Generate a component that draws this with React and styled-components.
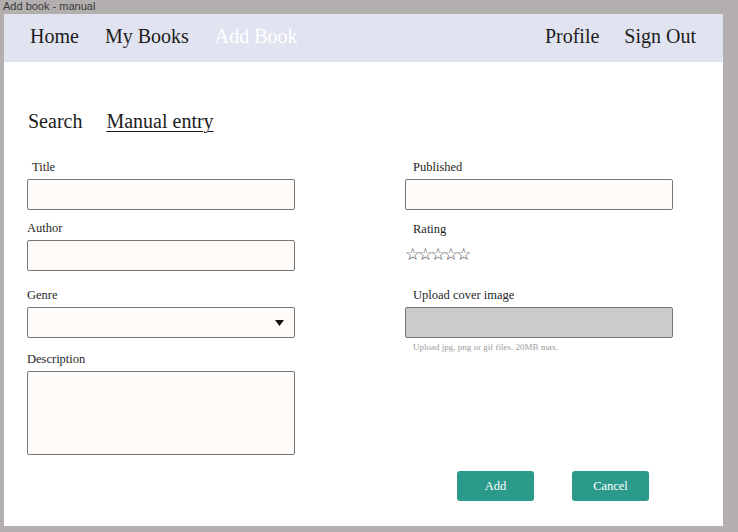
import styled, { createGlobalStyle } from 'styled-components'

const GlobalStyle = createGlobalStyle`
    html, body {
        margin: 0;
        padding: 0;
        background-color: #b3afaf;
    }
    * {
        box-sizing: border-box;
    }
`

const TitleBar = styled.div`
    height: 14px;
    padding-left: 3px;
    font-family: "Liberation Sans", Arial, sans-serif;
    font-size: 11px;
    line-height: 13px;
    color: #3a3a3a;
`

const Window = styled.div`
    margin-left: 4px;
    width: 719px;
    height: 512px;
    background-color: #ffffff;
    font-family: "Liberation Serif", "Times New Roman", serif;
    color: #1c1c1c;
`

const NavBar = styled.nav`
    height: 48px;
    display: flex;
    align-items: center;
    justify-content: space-between;
    padding: 0 27px 4px 26px;
    background-color: #e1e4f0;
`

const NavGroup = styled.div`
    display: flex;
    align-items: center;
    gap: ${p => p.$gap}px;
`

const NavLink = styled.a`
    font-size: 20px;
    line-height: 24px;
    color: ${p => (p.$active ? '#ffffff' : '#1c1c1c')};
    text-decoration: none;
    cursor: pointer;
`

const Content = styled.main`
    padding: 47px 0 0 23px;
`

const Tabs = styled.div`
    display: flex;
    gap: 24px;
    padding-left: 1px;
`

const Tab = styled.span`
    font-size: 20px;
    line-height: 24px;
    text-decoration: ${p => (p.$active ? 'underline' : 'none')};
    text-decoration-thickness: 1px;
    text-underline-offset: 3px;
    cursor: pointer;
`

const Columns = styled.div`
    display: flex;
    gap: 110px;
    margin-top: 27px;
`

const Column = styled.div`
    width: 268px;
    display: flex;
    flex-direction: column;
`

const Field = styled.div`
    display: flex;
    flex-direction: column;
    margin-top: ${p => p.$top || 0}px;
`

const Label = styled.label`
    font-size: 12.5px;
    line-height: 14px;
    color: #1f1f1f;
    padding-left: ${p => p.$indent || 0}px;
    margin-bottom: ${p => (p.$below === undefined ? 5 : p.$below)}px;
`

const Input = styled.input`
    height: 31px;
    width: 100%;
    border: 1px solid #767676;
    border-radius: 2px;
    background-color: ${p => (p.$grey ? '#cbcbcb' : '#fffbf8')};
    font-family: inherit;
    font-size: 13px;
    padding: 0 8px;
    outline: none;
`

const SelectWrap = styled.div`
    position: relative;
`

const Select = styled.select`
    height: 31px;
    width: 100%;
    border: 1px solid #767676;
    border-radius: 2px;
    background-color: #fffbf8;
    appearance: none;
    font-family: inherit;
    font-size: 13px;
    padding: 0 8px;
    outline: none;
`

const Caret = styled.svg`
    position: absolute;
    right: 11px;
    top: 13px;
    pointer-events: none;
`

const TextArea = styled.textarea`
    height: 84px;
    width: 100%;
    border: 1px solid #767676;
    border-radius: 2px;
    background-color: #fffbf8;
    resize: none;
    font-family: inherit;
    outline: none;
`

const Stars = styled.div`
    font-family: "DejaVu Sans", sans-serif;
    font-size: 17px;
    line-height: 13px;
    height: 13px;
    color: #4a4a4a;
    letter-spacing: -2.5px;
    margin-top: -1px;
`

const Help = styled.p`
    margin: 4px 0 0 8px;
    font-size: 9px;
    line-height: 10px;
    color: #9b9b9b;
`

const Actions = styled.div`
    display: flex;
    justify-content: flex-end;
    gap: 38px;
    margin-top: 16px;
    padding-right: 74px;
`

const Button = styled.button`
    width: 77px;
    height: 30px;
    border: none;
    border-radius: 3px;
    background-color: #2b9a8a;
    color: #ffffff;
    font-family: "Liberation Serif", "Times New Roman", serif;
    font-size: 12.5px;
    cursor: pointer;
`

function App() {
    return (
        <>
            <GlobalStyle />
            <TitleBar>Add book - manual</TitleBar>
            <Window>
                <NavBar>
                    <NavGroup $gap={26}>
                        <NavLink>Home</NavLink>
                        <NavLink>My Books</NavLink>
                        <NavLink $active>Add Book</NavLink>
                    </NavGroup>
                    <NavGroup $gap={25}>
                        <NavLink>Profile</NavLink>
                        <NavLink>Sign Out</NavLink>
                    </NavGroup>
                </NavBar>

                <Content>
                    <Tabs>
                        <Tab>Search</Tab>
                        <Tab $active>Manual entry</Tab>
                    </Tabs>

                    <Columns>
                        <Column>
                            <Field>
                                <Label $indent={5}>Title</Label>
                                <Input type="text" />
                            </Field>
                            <Field $top={11}>
                                <Label>Author</Label>
                                <Input type="text" />
                            </Field>
                            <Field $top={17}>
                                <Label>Genre</Label>
                                <SelectWrap>
                                    <Select defaultValue="">
                                        <option value=""></option>
                                    </Select>
                                    <Caret width="9" height="6" viewBox="0 0 9 6">
                                        <path d="M0 0 L9 0 L4.5 6 Z" fill="#111" />
                                    </Caret>
                                </SelectWrap>
                            </Field>
                            <Field $top={14}>
                                <Label>Description</Label>
                                <TextArea />
                            </Field>
                        </Column>

                        <Column>
                            <Field>
                                <Label $indent={8}>Published</Label>
                                <Input type="text" />
                            </Field>
                            <Field $top={12}>
                                <Label $indent={8} $below={13}>Rating</Label>
                                <Stars>☆☆☆☆☆</Stars>
                            </Field>
                            <Field $top={27}>
                                <Label $indent={8}>Upload cover image</Label>
                                <Input type="text" $grey readOnly />
                                <Help>Upload jpg, png or gif files. 20MB max.</Help>
                            </Field>
                        </Column>
                    </Columns>

                    <Actions>
                        <Button>Add</Button>
                        <Button>Cancel</Button>
                    </Actions>
                </Content>
            </Window>
        </>
    )
}

export default App
